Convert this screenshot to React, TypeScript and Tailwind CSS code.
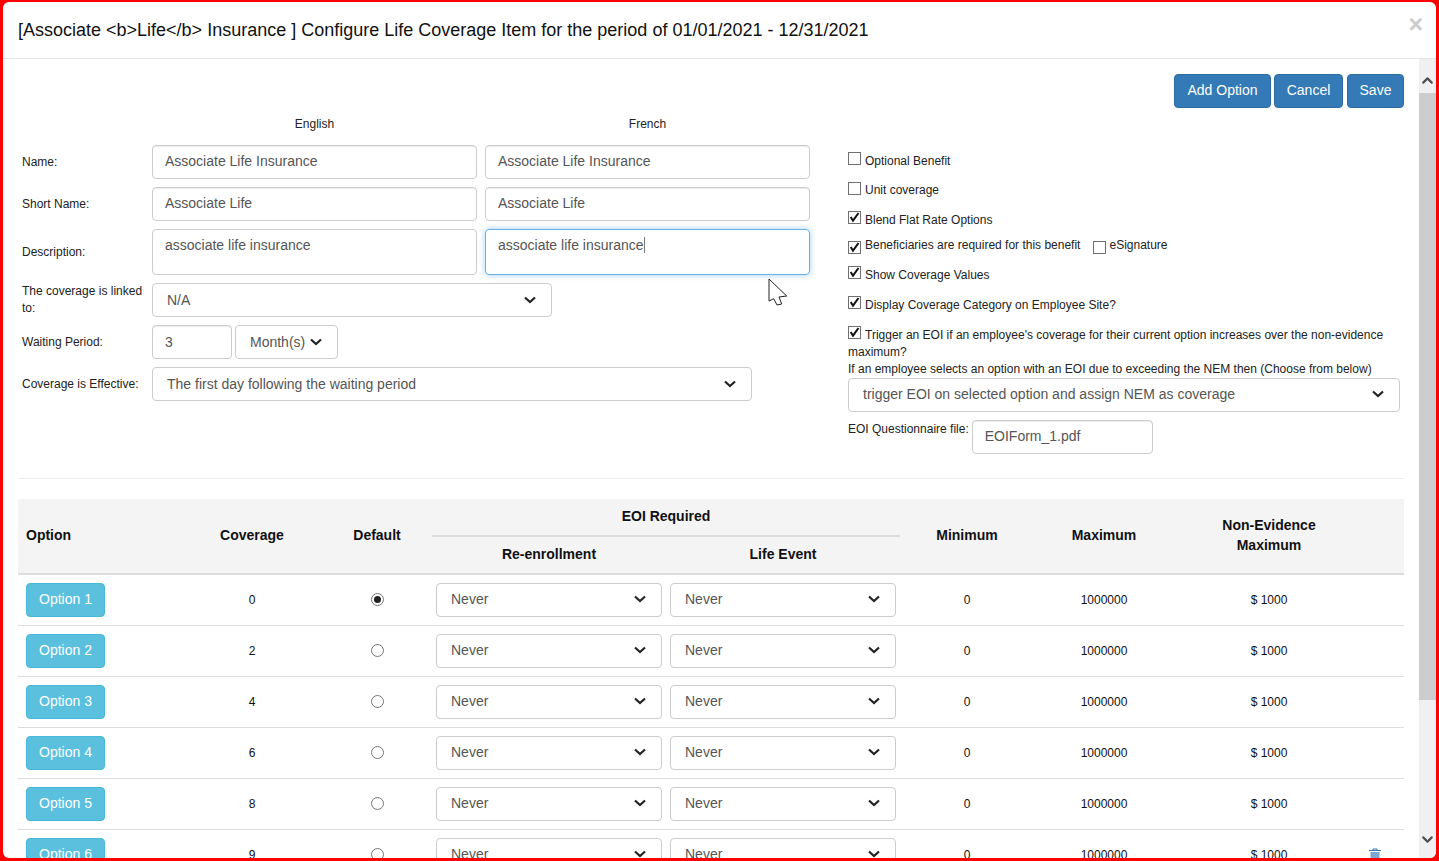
import React from 'react';
import { ChevronDown, ChevronUp } from 'lucide-react';

const rows = [
  { name: 'Option 1', coverage: '0', selected: true },
  { name: 'Option 2', coverage: '2' },
  { name: 'Option 3', coverage: '4' },
  { name: 'Option 4', coverage: '6' },
  { name: 'Option 5', coverage: '8' },
  { name: 'Option 6', coverage: '9', trash: true },
];

const columns = 'grid grid-cols-[164px_140px_110px_234px_234px_134px_140px_190px_40px]';

const Field: React.FC<{ value: string; className?: string }> = ({ value, className = '' }) => (
  <div className={`h-[34px] border border-[#ccc] rounded-[4px] bg-white px-3 pb-[2px] flex items-center text-sm text-[#555] shadow-[inset_0_1px_1px_rgba(0,0,0,0.075)] ${className}`}>
    {value}
  </div>
);

const Caret = () => (
  <svg viewBox="0 0 12 8" className="w-[12px] h-[8px] shrink-0">
    <path d="M1 1.5 L6 6 L11 1.5" fill="none" stroke="#222" strokeWidth="2.2" />
  </svg>
);

const Select: React.FC<{ value: string; className?: string }> = ({ value, className = '' }) => (
  <div className={`h-[34px] border border-[#ccc] rounded-[4px] bg-white pl-[14px] pr-[15px] pb-[2px] flex items-center justify-between text-sm text-[#555] ${className}`}>
    <span>{value}</span>
    <Caret />
  </div>
);

const CheckBox: React.FC<{ checked?: boolean; className?: string }> = ({ checked, className = '' }) => (
  <span className={`inline-block relative shrink-0 w-[13px] h-[13px] border border-[#707070] bg-white ${className}`}>
    {checked && (
      <svg viewBox="0 0 13 13" className="absolute left-[-1px] top-[-1px] w-[13px] h-[13px]">
        <path d="M2.7 6 L5 9.7 L10.5 2" fill="none" stroke="#111" strokeWidth="2" />
      </svg>
    )}
  </span>
);

const CheckRow: React.FC<{ label: string; checked?: boolean; className: string; labelClass?: string }> = ({ label, checked, className, labelClass = 'mt-[2px]' }) => (
  <div className={`flex items-center ${className}`}>
    <CheckBox checked={checked} className="mr-[4px] -mt-[3px]" />
    <span className={labelClass}>{label}</span>
  </div>
);

const Radio: React.FC<{ checked?: boolean }> = ({ checked }) => (
  <span className="w-[13px] h-[13px] rounded-full border border-[#767676] bg-white flex items-center justify-center">
    {checked && <span className="w-[7px] h-[7px] rounded-full bg-[#222]" />}
  </span>
);

const FormRow: React.FC<{ label: React.ReactNode; children: React.ReactNode; className?: string }> = ({ label, children, className = '' }) => (
  <div className={`flex items-center ${className}`}>
    <div className="w-[130px] mr-[4px] pl-[4px] shrink-0 text-xs leading-[17px] text-[#222]">{label}</div>
    {children}
  </div>
);

const Scrollbar = () => (
  <div className="w-[17px] shrink-0 bg-[#f0f0f0] flex flex-col items-center">
    <div className="h-[34px] flex items-end pb-[4px]">
      <ChevronUp size={17} strokeWidth={3} className="text-[#505050]" />
    </div>
    <div className="w-full h-[607px] bg-[#cdcdcd]" />
    <div className="flex-1 flex items-end pb-[10px]">
      <ChevronDown size={17} strokeWidth={3} className="text-[#505050]" />
    </div>
  </div>
);

export default function App() {
  return (
    <div className="w-[1439px] h-[861px] bg-[#f00] pt-[2px] pl-[3px] pr-[3px] pb-[3px] overflow-hidden font-['Liberation_Sans',Arial,sans-serif]">
      <div className="relative w-full h-full bg-white rounded-[6px] overflow-hidden flex flex-col text-[#222]">
        <div className="h-[57px] shrink-0 border-b border-[#e5e5e5] pl-[15px] flex items-center">
          <h1 className="text-lg text-[#111]">
            [Associate &lt;b&gt;Life&lt;/b&gt; Insurance ] Configure Life Coverage Item for the period of 01/01/2021 - 12/31/2021
          </h1>
          <span className="absolute right-[13px] top-[9px] text-[25px] leading-[26px] font-bold text-[#ccc]">×</span>
        </div>

        <div className="flex flex-1 min-h-0">
          <div className="w-[1416px] overflow-hidden pl-[15px] pr-[15px] pt-[15px]">
            <div className="flex justify-end gap-[3px] pr-0">
              <button className="h-[34px] w-[97px] pb-[2px] bg-[#337ab7] border border-[#2e6da4] rounded-[4px] text-sm text-white">Add Option</button>
              <button className="h-[34px] w-[69px] pb-[2px] bg-[#337ab7] border border-[#2e6da4] rounded-[4px] text-sm text-white">Cancel</button>
              <button className="h-[34px] w-[57px] pb-[2px] ml-px bg-[#337ab7] border border-[#2e6da4] rounded-[4px] text-sm text-white">Save</button>
            </div>

            <div className="flex h-[371px] border-b border-[#eee]">
              <div className="w-[830px] shrink-0">
                <div className="flex h-[37px] pb-[6px] items-center text-xs text-[#222] pl-[134px]">
                  <div className="w-[325px] text-center">English</div>
                  <div className="w-[325px] ml-[8px] text-center">French</div>
                </div>
                <div className="flex flex-col gap-[8px]">
                  <FormRow label="Name:">
                    <Field value="Associate Life Insurance" className="w-[325px]" />
                    <Field value="Associate Life Insurance" className="w-[325px] ml-[8px]" />
                  </FormRow>
                  <FormRow label="Short Name:">
                    <Field value="Associate Life" className="w-[325px]" />
                    <Field value="Associate Life" className="w-[325px] ml-[8px]" />
                  </FormRow>
                  <FormRow label="Description:">
                    <div className="w-[325px] h-[46px] border border-[#ccc] rounded-[4px] px-3 pt-[5px] text-sm leading-[20px] text-[#555]">associate life insurance</div>
                    <div className="w-[325px] h-[46px] ml-[8px] border border-[#66afe9] rounded-[4px] px-3 pt-[5px] text-sm leading-[20px] text-[#555] shadow-[0_0_6px_rgba(102,175,233,0.6)]">
                      associate life insurance<span className="inline-block w-px h-[16px] bg-[#777] align-text-bottom" />
                    </div>
                  </FormRow>
                  <FormRow label={<>The coverage is linked<br />to:</>}>
                    <Select value="N/A" className="w-[400px] pt-[2px]" />
                  </FormRow>
                  <FormRow label="Waiting Period:">
                    <Field value="3" className="w-[80px] pt-[2px]" />
                    <div className="h-[34px] w-[103px] ml-[3px] border border-[#ccc] rounded-[4px] pl-[14px] pr-[15px] pt-[2px] pb-[2px] flex items-center justify-between text-sm text-[#555]">
                      <span>Month(s)</span>
                      <Caret />
                    </div>
                  </FormRow>
                  <FormRow label="Coverage is Effective:">
                    <Select value="The first day following the waiting period" className="w-[600px] pt-[2px]" />
                  </FormRow>
                </div>
              </div>

              <div className="w-[552px] flex flex-col text-xs text-[#222]">
                <div className="h-[37px] shrink-0" />
                <CheckRow label="Optional Benefit" className="h-[30px]" />
                <CheckRow label="Unit coverage" className="h-[29px]" labelClass="" />
                <CheckRow label="Blend Flat Rate Options" checked className="h-[30px]" />
                <div className="flex items-start h-[25px] pt-[3px]">
                  <CheckBox checked className="mr-[4px] mt-[4px]" />
                  <span className="leading-[14px] mt-px">Beneficiaries are required for this benefit</span>
                  <CheckBox className="ml-[13px] mr-[3px] mt-[4px]" />
                  <span className="leading-[14px] mt-px">eSignature</span>
                </div>
                <CheckRow label="Show Coverage Values" checked className="h-[30px]" />
                <CheckRow label="Display Coverage Category on Employee Site?" checked className="h-[30px]" />
                <div className="mt-[7px] leading-[17px]">
                  <CheckBox checked className="mr-[4px] align-[0px]" />
                  Trigger an EOI if an employee's coverage for their current option increases over the non-evidence maximum?
                  <br />
                  If an employee selects an option with an EOI due to exceeding the NEM then (Choose from below)
                </div>
                <Select value="trigger EOI on selected option and assign NEM as coverage" />
                <div className="flex items-start mt-[8px]">
                  <span className="mt-[2px] mr-[3px] leading-[14px]">EOI Questionnaire file:</span>
                  <Field value="EOIForm_1.pdf" className="w-[181px]" />
                </div>
              </div>
            </div>

            <div className="mt-[20px]">
              <div className={`${columns} h-[76px] pb-[2px] bg-[#f4f4f4] border-b-2 border-[#ddd] text-sm font-bold text-[#111]`}>
                <div className="pl-[8px] flex items-center">Option</div>
                <div className="flex items-center justify-center">Coverage</div>
                <div className="flex items-center justify-center">Default</div>
                <div className="col-span-2 flex flex-col">
                  <div className="h-[38px] pb-[3px] flex items-center justify-center border-b-2 border-[#ddd]">EOI Required</div>
                  <div className="flex flex-1 items-center">
                    <div className="w-[234px] text-center">Re-enrollment</div>
                    <div className="w-[234px] text-center">Life Event</div>
                  </div>
                </div>
                <div className="flex items-center justify-center">Minimum</div>
                <div className="flex items-center justify-center">Maximum</div>
                <div className="flex items-center justify-center text-center leading-[20px]">Non-Evidence<br />Maximum</div>
                <div />
              </div>

              {rows.map((row) => (
                <div key={row.name} className={`${columns} h-[51px] border-b border-[#ddd] items-center text-xs text-[#111]`}>
                  <div className="pl-[8px]">
                    <button className="h-[34px] w-[79px] pb-[2px] bg-[#5bc0de] border border-[#46b8da] rounded-[4px] text-sm text-white">{row.name}</button>
                  </div>
                  <div className="text-center">{row.coverage}</div>
                  <div className="flex justify-center -mt-px"><Radio checked={row.selected} /></div>
                  <div className="px-[4px]"><Select value="Never" /></div>
                  <div className="px-[4px]"><Select value="Never" /></div>
                  <div className="text-center">0</div>
                  <div className="text-center">1000000</div>
                  <div className="text-center">$ 1000</div>
                  <div className="pl-[5px]">
                    {row.trash && (
                      <svg viewBox="0 0 12 14" className="w-[12px] h-[14px]">
                        <path d="M0 2.5 H12 M4 2.5 V1 H8 V2.5" fill="none" stroke="#337ab7" strokeWidth="1" />
                        <rect x="1.5" y="4" width="9" height="10" fill="#7ba7d0" />
                      </svg>
                    )}
                  </div>
                </div>
              ))}
            </div>
          </div>
          <Scrollbar />
        </div>

        <svg viewBox="0 0 24 32" className="absolute left-[764px] top-[275px] w-[24px] h-[32px]">
          <path d="M2 2 V24 L6.7 21.7 L10 28 L14.7 27 L12 20 L19.7 19 Z" fill="#fff" stroke="#222" strokeWidth="1" />
        </svg>
      </div>
    </div>
  );
}
